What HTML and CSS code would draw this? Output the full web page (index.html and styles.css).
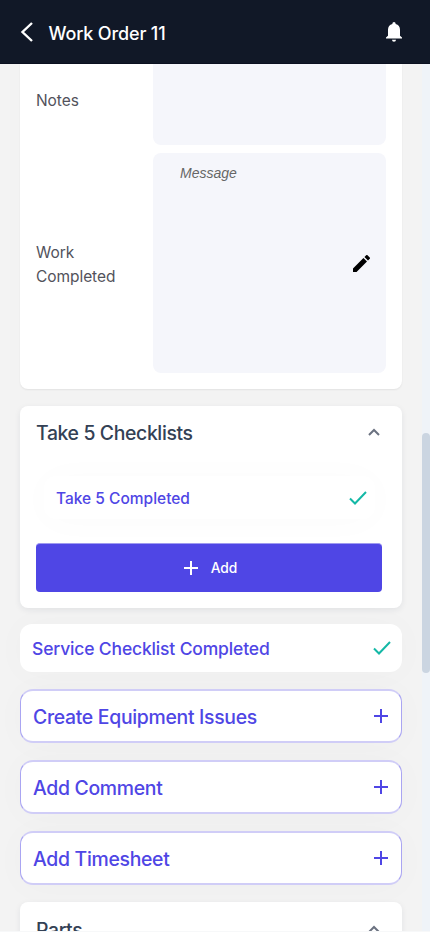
FILE: index.html
```html
<!DOCTYPE html>
<html lang="en">
<head>
<meta charset="utf-8">
<title>Work Order 11</title>
<link rel="stylesheet" href="styles.css">
</head>
<body>
<header class="topbar">
  <svg class="back" viewBox="0 0 14 22"><path d="M12 2 2.500 11l9.500 9"/></svg>
  <h1>Work Order 11</h1>
  <svg class="bell" viewBox="0 0 16 20"><path d="M8 0a1.600 1.600 0 0 0-1.600 1.600v.3A6 6 0 0 0 2 7.700v6L0 15.600v1h16v-1l-2-1.900v-6a6 6 0 0 0-4.400-5.800v-.3A1.600 1.600 0 0 0 8 0ZM6 17.700a2 2 0 0 0 4 0Z"/></svg>
</header>
<div class="viewport">
  <main>
    <section class="card details">
      <div class="label notes">Notes</div>
      <div class="field short"></div>
      <div class="label work">Work Completed</div>
      <div class="field tall">
        <span class="placeholder">Message</span>
        <svg class="pencil" viewBox="3 3 18 18"><path d="M3 17.250V21h3.750L17.810 9.940l-3.750-3.750ZM20.710 7.040a1 1 0 0 0 0-1.410l-2.340-2.340a1 1 0 0 0-1.410 0l-1.830 1.830 3.750 3.750Z"/></svg>
      </div>
    </section>
    <section class="card checklists">
      <div class="card-head"><h2>Take 5 Checklists</h2><svg class="chevron" viewBox="0 0 12 8"><path d="m1 7 5-5 5 5"/></svg></div>
      <div class="completed"><span>Take 5 Completed</span><svg class="check" viewBox="0 0 18 14"><path d="m1 7.500 5 5L17 1"/></svg></div>
      <button class="add"><svg class="plus" viewBox="0 0 14 14"><path d="M7 0v14M0 7h14"/></svg><span>Add</span></button>
    </section>
    <section class="service"><span>Service Checklist Completed</span><svg class="check" viewBox="0 0 18 14"><path d="m1 7.500 5 5L17 1"/></svg></section>
    <div class="action"><span>Create Equipment Issues</span><svg class="plus" viewBox="0 0 14 14"><path d="M7 0v14M0 7h14"/></svg></div>
    <div class="action"><span>Add Comment</span><svg class="plus" viewBox="0 0 14 14"><path d="M7 0v14M0 7h14"/></svg></div>
    <div class="action"><span>Add Timesheet</span><svg class="plus" viewBox="0 0 14 14"><path d="M7 0v14M0 7h14"/></svg></div>
    <section class="card parts">
      <div class="card-head"><h2>Parts</h2><svg class="chevron" viewBox="0 0 12 8"><path d="m1 7 5-5 5 5"/></svg></div>
    </section>
  </main>
  <div class="scroll-track"><div class="scroll-thumb"></div></div>
</div>
<footer class="bottom-edge"></footer>
</body>
</html>
```
FILE: styles.css
```css
* { box-sizing: border-box; }
body { margin: 0; height: 932px; overflow: hidden; background: #f3f3f3; font-family: Inter, "Liberation Sans", sans-serif; }
h1, h2 { margin: 0; font-weight: 500; }
svg { display: block; flex: none; fill: none; }
.topbar { height: 64px; display: flex; align-items: center; padding: 0 28px 0 20px; background: #111827; border-bottom: 1px solid #0b1020; color: #fff; }
.topbar h1 { flex: 1; margin: 5px 0 0 14.500px; font-size: 18px; font-weight: 550; line-height: 24px; letter-spacing: -.15px; }
.back { width: 14px; height: 22px; stroke: #fff; stroke-width: 2.400; }
.bell { width: 16px; height: 20px; fill: #fff; }
.viewport { display: flex; height: 867px; overflow: hidden; }
main { width: 422px; padding: 0 20px; display: flex; flex-direction: column; }
.card { flex: none; background: #fff; border-radius: 8px; box-shadow: 0 2px 6px rgba(30, 35, 70, .08); }
.details { height: 325px; display: grid; grid-template-columns: 117px 233px; grid-template-rows: 81px 220px; row-gap: 8px; padding: 0 16px 16px; border-radius: 0 0 8px 8px; box-shadow: 0 1px 2px rgba(0, 0, 0, .07); }
.label { align-self: center; padding-right: 20px; font-size: 15.500px; line-height: 24px; color: #52525b; letter-spacing: -.06px; }
.notes { padding-bottom: 7px; }
.work { padding-top: 4px; }
.field { background: #f5f6fb; border-radius: 8px; }
.short { border-radius: 0 0 8px 8px; }
.tall { display: flex; align-items: center; justify-content: space-between; padding: 0 16px 0 27px; }
.placeholder { align-self: flex-start; margin-top: 11px; font: italic 14px/18px "Liberation Sans", sans-serif; color: #666; }
.pencil { width: 17px; height: 17px; fill: #000; }
.checklists { height: 202px; margin-top: 17px; padding: 0 16px; display: flex; flex-direction: column; }
.card-head { display: flex; height: 54px; align-items: center; justify-content: space-between; padding-right: 6px; }
.card-head h2 { font-size: 19.400px; font-weight: 450; line-height: 28px; color: #334155; letter-spacing: -.36px; }
.chevron { width: 12px; height: 8px; margin-bottom: 2px; stroke: #6b7280; stroke-width: 2; }
.completed { height: 43px; margin: 16px 0 0 8px; padding: 0 8px 0 12px; width: 331px; display: flex; align-items: center; justify-content: space-between; border-radius: 12px; background: #fff; color: #4f46e5; font-size: 15.500px; font-weight: 480; letter-spacing: 0; box-shadow: 0 2px 38px rgba(0, 0, 0, .018); }
.completed span { padding-top: 2px; }
.check { width: 18px; height: 14px; stroke: #14b8a6; stroke-width: 2; }
.add { height: 49px; margin: 24px 0 0; padding: 0 0 0 3px; border: 0; border-top: 1px solid #9f9af0; border-radius: 4px; background: #4f46e5; color: #fff; font: 450 13.800px/20px Inter, sans-serif; display: flex; align-items: center; justify-content: center; gap: 13px; width: 346px; }
.plus { width: 14px; height: 14px; stroke: currentColor; stroke-width: 2; }
.service { flex: none; height: 48px; margin: 16px 0 17px; padding: 0 11px 0 12px; display: flex; align-items: center; justify-content: space-between; border-radius: 12px; background: #fff; color: #4f46e5; font-size: 17.500px; font-weight: 470; letter-spacing: -.16px; box-shadow: 0 1px 36px rgba(0, 0, 0, .025); }
.action { flex: none; height: 54px; margin-bottom: 17px; padding: 0 13px 0 12px; display: flex; align-items: center; justify-content: space-between; border: solid #d0cdf7; border-width: 2px 1px; border-left-color: #aaa5f2; border-right-color: #aaa5f2; border-radius: 13px; background: #fff; color: #4f46e5; font-size: 19.400px; font-weight: 470; letter-spacing: -.3px; box-shadow: 0 2px 36px rgba(0, 0, 0, .025); }
.action span { padding-top: 2px; }
.parts { height: 100px; }
.parts .card-head { height: 56px; padding: 0 22px 0 16px; }
.scroll-track { width: 8px; height: 868px; background: #eff3f8; padding-top: 369px; }
.scroll-thumb { height: 240px; border-radius: 4px; background: #cbd5e1; }
.bottom-edge { height: 1px; background: #f7f8f9; }
```
